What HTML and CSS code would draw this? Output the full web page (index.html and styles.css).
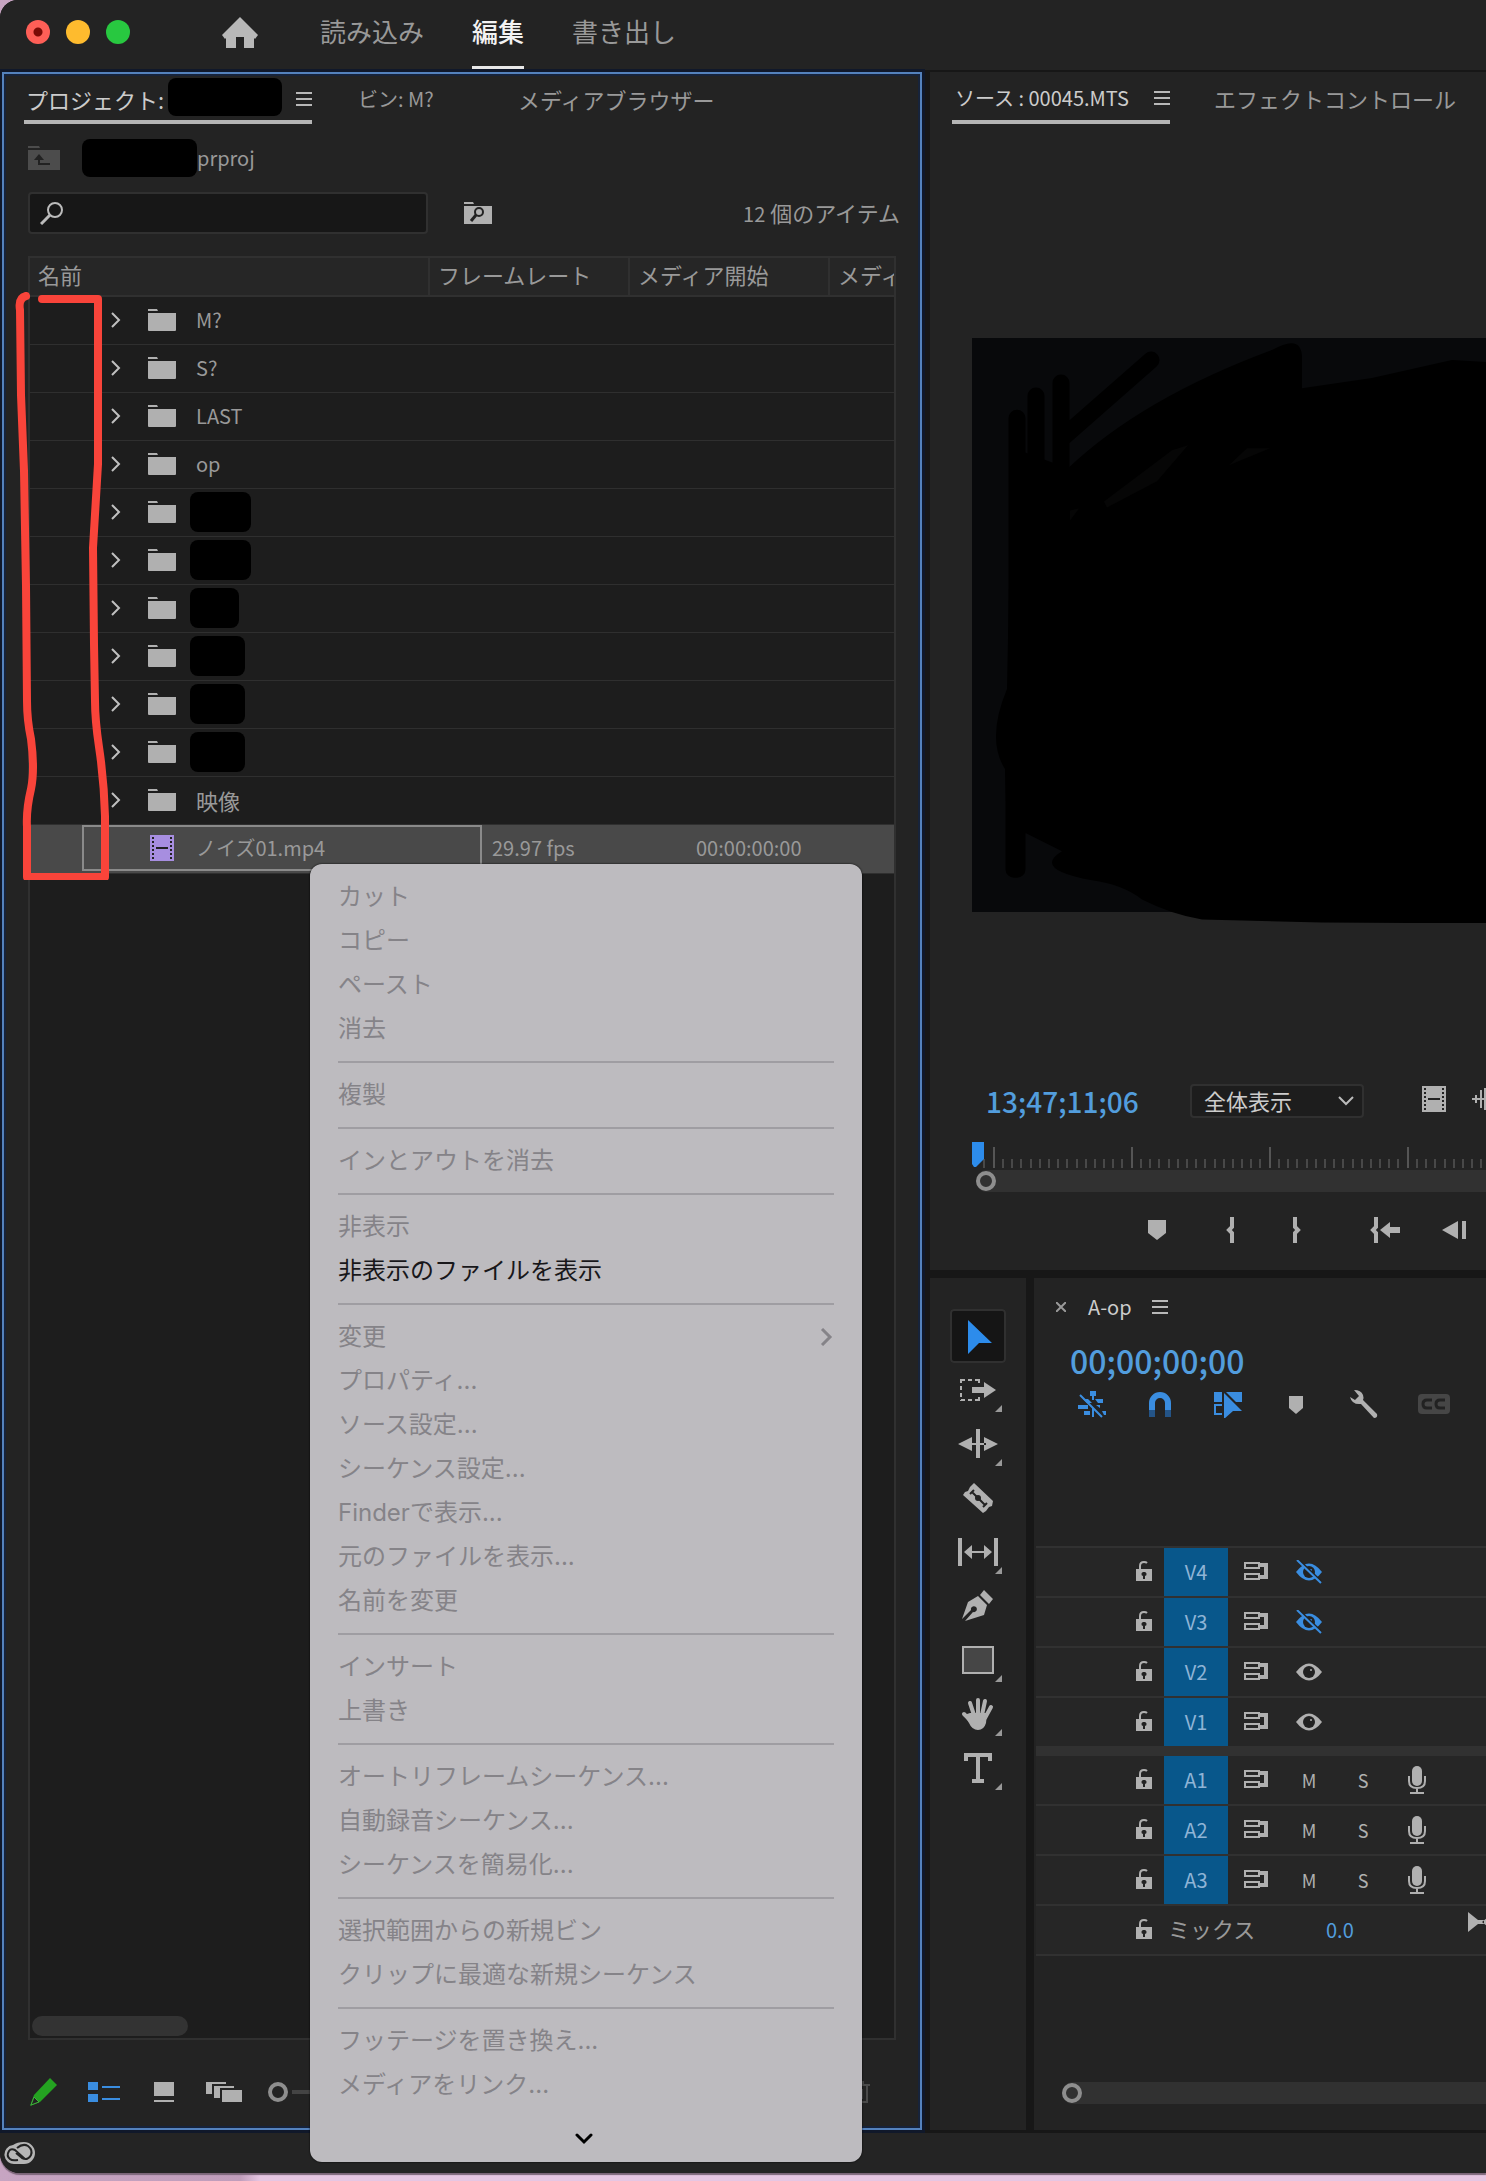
FILE: index.html
```html
<!DOCTYPE html>
<html lang="ja">
<head>
    <meta charset="UTF-8">
    <meta name="viewport" content="width=device-width, initial-scale=1.0">
    <title>編集</title>
    <link rel="stylesheet" href="styles.css">
</head>
<body>
    <!-- Shared icons -->
    <svg class="sprite" aria-hidden="true">
        <symbol id="i-menu" viewBox="0 0 16 14"><path d="M0 1h16M0 7h16M0 13h16" stroke="currentColor" stroke-width="2"/></symbol>
        <symbol id="i-folder" viewBox="0 0 28 22"><path d="M0 0h9l1 2H0zM0 4h28v17a1 1 0 0 1-1 1H1a1 1 0 0 1-1-1z" fill="currentColor"/></symbol>
        <symbol id="i-chevron" viewBox="0 0 10 16"><path d="M1 1l7 7-7 7" fill="none" stroke="currentColor" stroke-width="2"/></symbol>
        <symbol id="i-film" viewBox="0 0 24 26">
            <path d="M0 0h24v26H0z" fill="currentColor"/>
            <path d="M3 2v24M21 2v24" stroke="#222" stroke-width="2" stroke-dasharray="2 2"/>
            <path d="M6 13h12" stroke="#222" stroke-width="2"/>
        </symbol>
        <symbol id="i-marker" viewBox="0 0 18 20"><path d="M0 0h18v13l-9 7-9-7z" fill="currentColor"/></symbol>
        <symbol id="i-lock" viewBox="0 0 16 20">
            <path d="M4 9V5q0-4 4-4 2 0 3 1" fill="none" stroke="currentColor" stroke-width="2"/>
            <path d="M0 8h16v12H0z" fill="currentColor"/>
            <path d="M8 11a2 2 0 0 1 1 4v3H7v-3a2 2 0 0 1 1-4z" fill="#222"/>
        </symbol>
        <symbol id="i-sync" viewBox="0 0 24 18">
            <path d="M1 1h14v5H1zM1 12h14v5H1z" fill="none" stroke="currentColor" stroke-width="2"/>
            <path d="M16 1h8v16h-8v-4h4V5h-4z" fill="currentColor"/>
        </symbol>
        <symbol id="i-eye" viewBox="0 0 26 24">
            <path d="M0 12q13-17 26 0-13 17-26 0z" fill="currentColor"/>
            <circle cx="13" cy="12" r="6" fill="#222"/><circle cx="15" cy="10" r="1" fill="currentColor"/>
        </symbol>
        <symbol id="i-eye-off" viewBox="0 0 26 24">
            <path d="M0 12q13-17 26 0-13 17-26 0z" fill="currentColor"/>
            <circle cx="13" cy="12" r="6" fill="#222"/><circle cx="15" cy="10" r="1" fill="currentColor"/>
            <path d="M3 0l24 23" stroke="#222" stroke-width="2"/>
            <path d="M1 0l24 23" stroke="currentColor" stroke-width="2"/>
        </symbol>
        <symbol id="i-mic" viewBox="0 0 18 28">
            <rect x="4" width="10" height="20" rx="5" fill="currentColor"/>
            <path d="M1 10v5q0 7 8 7t8-7v-5M9 22v5M2 27h14" fill="none" stroke="currentColor" stroke-width="2"/>
        </symbol>
    </svg>

    <div class="app">
        <header class="top-bar">
            <div class="lights">
                <span class="light light-close"></span>
                <span class="light light-min"></span>
                <span class="light light-max"></span>
            </div>
            <button class="home" aria-label="ホーム">
                <svg width="36" height="32" viewBox="0 0 36 32"><path d="M18 0L0 18l3 4 1-1v10h10V20h8v11h10V21l1 1 3-4z" fill="#b8b8b8"/></svg>
            </button>
            <nav class="modes">
                <a href="#">読み込み</a>
                <a href="#" class="active">編集</a>
                <a href="#">書き出し</a>
            </nav>
        </header>

        <main class="workspace">
            <section class="project">
                <div class="tabs">
                    <button class="tab tab-project active">プロジェクト: <span class="redacted"></span><svg class="menu-icon"><use href="#i-menu"/></svg></button>
                    <button class="tab tab-bin">ビン: M?</button>
                    <button class="tab">メディアブラウザー</button>
                </div>

                <div class="path">
                    <svg width="32" height="24" viewBox="0 0 32 24"><path d="M0 0h11l1 2H0zM0 4h32v20H0z" fill="#4c4c4c"/><path d="M11 10v8h11" fill="none" stroke="#222" stroke-width="2"/><path d="M6 14l5-6 5 6z" fill="#222"/></svg>
                    <span class="redacted"></span>
                    <span class="latin">prproj</span>
                </div>

                <div class="search-row">
                    <label class="search">
                        <svg width="24" height="24" viewBox="0 0 24 24"><circle cx="15" cy="9" r="7" fill="none" stroke="#bbb" stroke-width="2"/><path d="M10 14l-9 9" stroke="#bbb" stroke-width="3"/></svg>
                        <input type="text" aria-label="検索">
                    </label>
                    <button class="search-bin" aria-label="検索ビン">
                        <svg width="28" height="22" viewBox="0 0 28 22"><path d="M0 0h9l1 2H0zM0 4h28v18H0z" fill="#b0b0b0"/><circle cx="15" cy="10" r="4" fill="none" stroke="#222" stroke-width="2"/><path d="M12 13l-5 6" stroke="#222" stroke-width="3"/></svg>
                    </button>
                    <span class="count"><span class="latin">12</span> 個のアイテム</span>
                </div>

                <div class="list">
                    <table class="items">
                        <colgroup>
                            <col class="c-label"><col class="c-name"><col class="c-label"><col class="c-rate">
                            <col class="c-label"><col class="c-rate"><col>
                        </colgroup>
                        <thead>
                            <tr><th colspan="2">名前</th><th colspan="2">フレームレート</th><th colspan="2">メディア開始</th><th>メディア</th></tr>
                        </thead>
                        <tbody>
                            <tr><td></td><td colspan="2"><div class="name"><svg class="chevron"><use href="#i-chevron"/></svg><svg class="folder"><use href="#i-folder"/></svg><span class="latin">M?</span></div></td><td colspan="2"></td><td colspan="2"></td></tr>
                            <tr><td></td><td colspan="2"><div class="name"><svg class="chevron"><use href="#i-chevron"/></svg><svg class="folder"><use href="#i-folder"/></svg><span class="latin">S?</span></div></td><td colspan="2"></td><td colspan="2"></td></tr>
                            <tr><td></td><td colspan="2"><div class="name"><svg class="chevron"><use href="#i-chevron"/></svg><svg class="folder"><use href="#i-folder"/></svg><span class="latin">LAST</span></div></td><td colspan="2"></td><td colspan="2"></td></tr>
                            <tr><td></td><td colspan="2"><div class="name"><svg class="chevron"><use href="#i-chevron"/></svg><svg class="folder"><use href="#i-folder"/></svg><span class="latin">op</span></div></td><td colspan="2"></td><td colspan="2"></td></tr>
                            <tr><td></td><td colspan="2"><div class="name"><svg class="chevron"><use href="#i-chevron"/></svg><svg class="folder"><use href="#i-folder"/></svg><span class="redacted wide"></span></div></td><td colspan="2"></td><td colspan="2"></td></tr>
                            <tr><td></td><td colspan="2"><div class="name"><svg class="chevron"><use href="#i-chevron"/></svg><svg class="folder"><use href="#i-folder"/></svg><span class="redacted wide"></span></div></td><td colspan="2"></td><td colspan="2"></td></tr>
                            <tr><td></td><td colspan="2"><div class="name"><svg class="chevron"><use href="#i-chevron"/></svg><svg class="folder"><use href="#i-folder"/></svg><span class="redacted narrow"></span></div></td><td colspan="2"></td><td colspan="2"></td></tr>
                            <tr><td></td><td colspan="2"><div class="name"><svg class="chevron"><use href="#i-chevron"/></svg><svg class="folder"><use href="#i-folder"/></svg><span class="redacted"></span></div></td><td colspan="2"></td><td colspan="2"></td></tr>
                            <tr><td></td><td colspan="2"><div class="name"><svg class="chevron"><use href="#i-chevron"/></svg><svg class="folder"><use href="#i-folder"/></svg><span class="redacted"></span></div></td><td colspan="2"></td><td colspan="2"></td></tr>
                            <tr><td></td><td colspan="2"><div class="name"><svg class="chevron"><use href="#i-chevron"/></svg><svg class="folder"><use href="#i-folder"/></svg><span class="redacted"></span></div></td><td colspan="2"></td><td colspan="2"></td></tr>
                            <tr><td></td><td colspan="2"><div class="name"><svg class="chevron"><use href="#i-chevron"/></svg><svg class="folder"><use href="#i-folder"/></svg><span>映像</span></div></td><td colspan="2"></td><td colspan="2"></td></tr>
                            <tr class="selected"><td></td><td colspan="2"><div class="name"><span class="chevron"></span><svg class="clip"><use href="#i-film"/></svg><span class="latin">ノイズ01.mp4</span></div></td><td colspan="2" class="rate">29.97 fps</td><td colspan="2" class="start">00:00:00:00</td></tr>
                        </tbody>
                    </table>
                    <div class="list-scroll"></div>
                </div>

                <footer class="project-tools">
                    <svg width="28" height="28" viewBox="0 0 28 28"><path d="M20 0l7 7L10 24 0 28l4-11z" fill="#24a321"/><path d="M4 19l5 5-8 3z" fill="#222" stroke="#3fb03c"/></svg>
                    <svg class="blue" width="32" height="20" viewBox="0 0 32 20"><path d="M0 0h10v8H0zM0 12h10v8H0zM14 4h18v2H14zM14 16h18v2H14z" fill="currentColor"/></svg>
                    <svg width="20" height="20" viewBox="0 0 20 20"><path d="M0 0h20v14H0zM0 18h20v2H0z" fill="currentColor"/></svg>
                    <svg width="36" height="20" viewBox="0 0 36 20"><path d="M0 0h20v2H6v10H0zM8 4h20v2H14v10H8zM16 8h20v12H16z" fill="currentColor"/></svg>
                    <div class="zoom-slider"><span class="knob"></span><span class="line"></span></div>
                    <svg class="trash" width="20" height="22" viewBox="0 0 20 22"><path d="M0 4h20M3 4v17h14V4M7 4V1h6v3M8 8v10M12 8v10" fill="none" stroke="#4a4a4a" stroke-width="2"/></svg>
                </footer>

                <!-- Hand drawn mark over the label column -->
                <svg class="mark" width="110" height="600" viewBox="0 0 110 600">
                    <path d="M26 16Q18 18 20 30L21 115 24 191 26 306 27 421Q27 440 31 459 35 490 31 509 26 530 27 547L27 597H105L105 536Q104 500 99 467 95 440 95 421L94 364 93 268 98 184V19L42 19" fill="none" stroke="#f9443a" stroke-width="8" stroke-linecap="round" stroke-linejoin="round"/>
                </svg>

                <div class="context-menu">
                    <button disabled>カット</button>
                    <button disabled>コピー</button>
                    <button disabled>ペースト</button>
                    <button disabled>消去</button>
                    <hr>
                    <button disabled>複製</button>
                    <hr>
                    <button disabled>インとアウトを消去</button>
                    <hr>
                    <button disabled>非表示</button>
                    <button>非表示のファイルを表示</button>
                    <hr>
                    <button disabled>変更<svg width="14" height="18" viewBox="0 0 14 18"><path d="M2 1l8 8-8 8" fill="none" stroke="currentColor" stroke-width="3"/></svg></button>
                    <button disabled>プロパティ...</button>
                    <button disabled>ソース設定...</button>
                    <button disabled>シーケンス設定...</button>
                    <button disabled>Finderで表示...</button>
                    <button disabled>元のファイルを表示...</button>
                    <button disabled>名前を変更</button>
                    <hr>
                    <button disabled>インサート</button>
                    <button disabled>上書き</button>
                    <hr>
                    <button disabled>オートリフレームシーケンス...</button>
                    <button disabled>自動録音シーケンス...</button>
                    <button disabled>シーケンスを簡易化...</button>
                    <hr>
                    <button disabled>選択範囲からの新規ビン</button>
                    <button disabled>クリップに最適な新規シーケンス</button>
                    <hr>
                    <button disabled>フッテージを置き換え...</button>
                    <button disabled>メディアをリンク...</button>
                    <div class="more"><svg width="18" height="12" viewBox="0 0 18 12"><path d="M2 2l7 7 7-7" fill="none" stroke="#000" stroke-width="3" stroke-linecap="round"/></svg></div>
                </div>
            </section>

            <div class="right">
                <section class="source">
                    <div class="tabs">
                        <button class="tab tab-source active"><span class="latin">ソース : 00045.MTS</span><svg class="menu-icon"><use href="#i-menu"/></svg></button>
                        <button class="tab">エフェクトコントロール</button>
                    </div>
                    <div class="monitor">
                        <svg viewBox="0 0 514 584" preserveAspectRatio="none">
                            <path d="M45 80V530M64 58V300M89 45V300M179 22L90 100M42 400V530" stroke="#000" stroke-width="17" stroke-linecap="round"/>
                            <path d="M96 130Q170 60 300 12 330-5 330 20V50L400 40 480 22 514 24V584L350 583 230 580Q200 575 170 560 150 545 120 541 60 530 90 512L54 494H35L33 430Q14 400 35 350L38 200 41 110 96 130z"/>
                            <path d="M132 163l68-51 16-5-31 36-50 26zM257 127l18-17h23zM98 172l9-2-9 12z" fill="#060606"/>
                        </svg>
                    </div>
                    <div class="source-bar">
                        <span class="timecode">13;47;11;06</span>
                        <select class="fit" aria-label="表示倍率"><option>全体表示</option></select>
                        <svg class="film"><use href="#i-film"/></svg>
                        <svg class="wave" width="24" height="22" viewBox="0 0 24 22"><path d="M0 11h24M4 7v8M9 2v18M13 0v22M17 5v12M21 8v6" stroke="currentColor" stroke-width="2"/></svg>
                    </div>
                    <div class="ruler">
                        <svg width="100%" height="26">
                            <defs>
                                <pattern id="ticks" x="21" width="138" height="26" patternUnits="userSpaceOnUse">
                                    <path d="M1 5v21" stroke="#555" stroke-width="2"/>
                                    <path d="M10 17v9M19 17v9M28 17v9M38 17v9M47 17v9M56 17v9M65 17v9M74 17v9M84 17v9M93 17v9M102 17v9M111 17v9M120 17v9M129 17v9" stroke="#484848" stroke-width="2"/>
                                </pattern>
                            </defs>
                            <rect x="4" width="100%" height="26" fill="url(#ticks)"/>
                            <path d="M0 0h12v17l-8 8H2L0 22z" fill="#2d8ceb"/>
                        </svg>
                        <div class="scroller"><span class="knob"></span></div>
                    </div>
                    <div class="transport">
                        <button class="add-marker" aria-label="マーカーを追加"><svg width="18" height="20"><use href="#i-marker"/></svg></button>
                        <button aria-label="インをマーク"><svg width="10" height="26" viewBox="0 0 10 26"><path d="M6 0v10l-3 3 3 3v10" fill="none" stroke="currentColor" stroke-width="4"/></svg></button>
                        <button aria-label="アウトをマーク"><svg width="10" height="26" viewBox="0 0 10 26"><path d="M4 0v10l3 3-3 3v10" fill="none" stroke="currentColor" stroke-width="4"/></svg></button>
                        <button class="go-in" aria-label="インへ移動"><svg width="30" height="26" viewBox="0 0 30 26"><path d="M6 0v10l-3 3 3 3v10" fill="none" stroke="currentColor" stroke-width="4"/><path d="M10 13l10-8v5h10v6H20v5z" fill="currentColor"/></svg></button>
                        <button aria-label="1フレーム戻る"><svg width="24" height="18" viewBox="0 0 24 18"><path d="M0 9L16 0v18zM20 0h4v18h-4z" fill="currentColor"/></svg></button>
                    </div>
                </section>

                <div class="lower">
                    <section class="tools">
                        <button class="tool active" aria-label="選択"><svg viewBox="0 0 56 54"><path d="M18 11l24 23H29l-11 11z" fill="#2d8ceb"/></svg></button>
                        <button class="tool" aria-label="トラックの選択"><svg viewBox="0 0 56 54"><path d="M11 17h18M11 37h18M11 16v22M29 16v4M29 34v4" fill="none" stroke="currentColor" stroke-width="2" stroke-dasharray="4 3"/><path d="M22 24h12v-5l12 8-12 8v-5H22z" fill="currentColor"/><path d="M52 42v7h-7z" fill="#999"/></svg></button>
                        <button class="tool" aria-label="リップル"><svg viewBox="0 0 56 54"><path d="M8 27l14-7v14zM48 27l-14-7v14zM26 12h4v29h-4zM20 26h16v2H20z" fill="currentColor"/><path d="M52 42v7h-7z" fill="#999"/></svg></button>
                        <button class="tool" aria-label="レーザー"><svg viewBox="0 0 56 54"><path d="M24 12l19 18-1 5-3 1-3 4-3 2-20-18 2-3 3-1 2-4z" fill="currentColor"/><path d="M22 21l13 13M20 23l4-4M33 36l4-4" stroke="#222" stroke-width="2"/><circle cx="28" cy="27" r="3" fill="#222"/></svg></button>
                        <button class="tool" aria-label="スリップ"><svg viewBox="0 0 56 54"><path d="M8 13h4v28H8zM44 13h4v28h-4zM14 27l8-7v6h12v-6l8 7-8 7v-6H22v6z" fill="currentColor"/><path d="M52 42v7h-7z" fill="#999"/></svg></button>
                        <button class="tool" aria-label="ペン"><svg viewBox="0 0 56 54"><path d="M34 11l9 9-4 5-9-9zM28 17l9 9-3 10-19 6 8-9a3 3 0 1 0-2-2l-9 9 6-17z" fill="currentColor"/></svg></button>
                        <button class="tool" aria-label="長方形"><svg viewBox="0 0 56 54"><path d="M13 14h30v26H13z" fill="#464646" stroke="currentColor" stroke-width="2"/><path d="M52 42v7h-7z" fill="#999"/></svg></button>
                        <button class="tool" aria-label="手のひら"><svg viewBox="0 0 56 54"><path d="M21 34L14 27M24 28L20 16M28 26V13M32 28l3-14M35 31l6-11" stroke="currentColor" stroke-width="4" stroke-linecap="round"/><path d="M20 26h17l-1 10q-2 7-8 7t-9-7l-5-8z" fill="currentColor"/><path d="M52 42v7h-7z" fill="#999"/></svg></button>
                        <button class="tool" aria-label="横書き文字"><svg viewBox="0 0 56 54"><path d="M16 20v-6h24v6M28 14v26M22 40h12" fill="none" stroke="currentColor" stroke-width="4"/><path d="M52 42v7h-7z" fill="#999"/></svg></button>
                    </section>

                    <section class="timeline">
                        <div class="sequence-tab">
                            <button aria-label="閉じる"><svg width="10" height="10" viewBox="0 0 10 10"><path d="M0 0l10 10M10 0L0 10" stroke="#999" stroke-width="2"/></svg></button>
                            <span class="sequence-name">A-op</span>
                            <svg class="menu-icon"><use href="#i-menu"/></svg>
                        </div>
                        <div class="timecode timecode-large">00;00;00;00</div>
                        <div class="sequence-tools">
                            <svg class="blue" viewBox="0 0 28 28"><path d="M12 1h6v5h-2v4h-2V6h-2zM17 9h8v4h-5zM5 9h5l4 4H9zM0 15h10v4H0zM18 15h4v3zM6 21h6v4H6zM14 18v10M24 21h4v4h-2z" fill="currentColor"/><path d="M2 5l22 22M15 18v9" stroke="currentColor" stroke-width="2"/></svg>
                            <svg class="blue" viewBox="0 0 28 28"><path d="M6 20v-7a8 8 0 0 1 16 0v7" fill="none" stroke="currentColor" stroke-width="6"/><path d="M3 20h6v7H3zM19 20h6v7h-6z" fill="#245487"/></svg>
                            <svg class="blue" viewBox="0 0 28 28"><path d="M0 2h8v10H0zM12 2h16v10h-6zM10 3l18 18h-9l-9 8z" fill="currentColor"/><path d="M8 15H1v9h7" fill="none" stroke="currentColor" stroke-width="2"/></svg>
                            <svg viewBox="0 0 28 28"><path d="M7 6h14v12l-7 6-7-6z" fill="currentColor"/></svg>
                            <svg viewBox="0 0 28 28"><path d="M4 0q7 0 9 5 1 3 0 5l14 14q1 4-3 4L11 14q-9 1-11-7l5 3 4-4z" fill="currentColor"/></svg>
                            <svg class="cc" viewBox="0 0 32 28"><rect y="4" width="32" height="20" rx="4" fill="#464646"/><path d="M14 10H9q-4 0-4 4t4 4h5M27 10h-5q-4 0-4 4t4 4h5" fill="none" stroke="#222" stroke-width="3"/></svg>
                        </div>

                        <div class="tracks">
                            <div class="track"><svg class="lock"><use href="#i-lock"/></svg><button class="target">V4</button><svg class="sync"><use href="#i-sync"/></svg><svg class="eye blue"><use href="#i-eye-off"/></svg></div>
                            <div class="track"><svg class="lock"><use href="#i-lock"/></svg><button class="target">V3</button><svg class="sync"><use href="#i-sync"/></svg><svg class="eye blue"><use href="#i-eye-off"/></svg></div>
                            <div class="track"><svg class="lock"><use href="#i-lock"/></svg><button class="target">V2</button><svg class="sync"><use href="#i-sync"/></svg><svg class="eye"><use href="#i-eye"/></svg></div>
                            <div class="track"><svg class="lock"><use href="#i-lock"/></svg><button class="target">V1</button><svg class="sync"><use href="#i-sync"/></svg><svg class="eye"><use href="#i-eye"/></svg></div>
                            <div class="track-split"></div>
                            <div class="track"><svg class="lock"><use href="#i-lock"/></svg><button class="target">A1</button><svg class="sync"><use href="#i-sync"/></svg><button class="toggle">M</button><button class="toggle">S</button><svg class="mic"><use href="#i-mic"/></svg></div>
                            <div class="track"><svg class="lock"><use href="#i-lock"/></svg><button class="target">A2</button><svg class="sync"><use href="#i-sync"/></svg><button class="toggle">M</button><button class="toggle">S</button><svg class="mic"><use href="#i-mic"/></svg></div>
                            <div class="track"><svg class="lock"><use href="#i-lock"/></svg><button class="target">A3</button><svg class="sync"><use href="#i-sync"/></svg><button class="toggle">M</button><button class="toggle">S</button><svg class="mic"><use href="#i-mic"/></svg></div>
                            <div class="track"><svg class="lock"><use href="#i-lock"/></svg><span class="mix">ミックス</span><span class="level">0.0</span><svg class="skip" width="32" height="20" viewBox="0 0 32 20"><path d="M0 0l10 8h6v4h-6L0 20zM26 0L14 10l12 10z" fill="currentColor"/></svg></div>
                        </div>

                        <div class="scroller"><span class="knob"></span></div>
                    </section>
                </div>
            </div>
        </main>

        <footer class="status-bar">
            <svg width="32" height="24" viewBox="0 0 32 24"><path d="M20 1a11 11 0 0 1 0 22H11A9 9 0 0 1 9 4q4-3 11-3z" fill="#b5b5b5"/><path d="M21 18l-10-9q-4-2-6 1-3 5 1 8 2 2 8 1M13 7q6-5 11-2 5 4 3 9-3 6-9 3l-6-5" fill="none" stroke="#222" stroke-width="2"/></svg>
        </footer>
    </div>
</body>
</html>
```
FILE: styles.css
```css
* {
    box-sizing: border-box;
}

body {
    display: flex;
    flex-direction: column;
    min-height: 100vh;
    margin: 0;
    padding-bottom: 8px;
    background: linear-gradient(to right, #c7a5c2, #c09dbb 240px, #e6c6e2 260px);
    color: #999;
    font-family: "Noto Sans CJK JP", sans-serif;
    font-size: 22px;
    line-height: 32px;
    overflow-x: hidden;
}

button {
    margin: 0;
    padding: 0;
    border: none;
    background: none;
    color: inherit;
    font: inherit;
    white-space: nowrap;
}

svg {
    display: block;
    flex: none;
}

.sprite {
    position: absolute;
    width: 0;
    height: 0;
}

.latin {
    font-size: 20px;
}

.blue {
    color: #3a8de0;
}

.app {
    display: flex;
    flex: 1;
    flex-direction: column;
    border-radius: 18px 0 0 20px;
    background-color: #171717;
    overflow: hidden;
    box-shadow: 0 2px 1px #7b6578;
}

/* Top bar */
.top-bar {
    display: flex;
    height: 70px;
    margin-bottom: 2px;
    padding-left: 26px;
    background-color: #232323;
}

.lights {
    display: flex;
    gap: 16px;
    padding-top: 20px;
}

.light {
    width: 24px;
    height: 24px;
    border-radius: 50%;
}

.light-close {
    background: radial-gradient(circle, #7a0b06 4px, #fe5f57 5px);
}

.light-min {
    background-color: #febb2e;
}

.light-max {
    background-color: #28c840;
}

.home {
    width: 36px;
    margin-left: 92px;
    padding-bottom: 4px;
}

.modes {
    display: flex;
    gap: 48px;
    margin-left: 62px;
    font-size: 26px;
}

.modes a {
    height: 69px;
    padding-top: 15px;
    border-bottom: 3px solid transparent;
    color: #999;
    text-decoration: none;
}

.modes .active {
    border-color: #e8e8e8;
    color: #f2f2f2;
    font-weight: 500;
}

/* Panels */
.workspace {
    display: grid;
    flex: 1;
    grid-template-columns: minmax(0, 920fr) minmax(0, 556fr);
    gap: 8px;
    padding-left: 2px;
}

.project,
.source,
.tools,
.timeline {
    background-color: #232323;
}

.tabs {
    display: flex;
    height: 50px;
}

.tab {
    display: flex;
    align-items: center;
    padding-top: 4px;
    border-bottom: 4px solid transparent;
}

.tab.active {
    border-color: #b5b5b5;
    color: #ccc;
}

.menu-icon {
    width: 16px;
    height: 14px;
    margin-left: auto;
    color: #b8b8b8;
}

.redacted {
    flex: none;
    background-color: #000;
    border-radius: 8px;
}

/* Project panel */
.project {
    position: relative;
    display: flex;
    flex-direction: column;
    border: 2px solid #5482bd;
    box-shadow: 0 0 0 3px #10182a, inset 0 0 0 2px #17233a;
}

.project .tabs {
    padding-left: 20px;
}

.tab-project {
    width: 288px;
    padding-left: 2px;
}

.tab-project .redacted {
    width: 114px;
    height: 38px;
    margin: 0 0 4px 4px;
}

.tab-bin {
    width: 160px;
    margin-left: 46px;
    font-size: 20px;
}

.path {
    display: flex;
    align-items: center;
    height: 68px;
    padding-left: 24px;
}

.path .redacted {
    width: 115px;
    height: 38px;
    margin-left: 22px;
}

.search-row {
    display: flex;
    align-items: center;
    padding: 0 20px 0 24px;
}

.search {
    display: flex;
    align-items: center;
    width: 400px;
    height: 42px;
    padding-left: 10px;
    border: 2px solid #303030;
    border-radius: 4px;
    background-color: #171717;
}

.search input {
    flex: 1;
    min-width: 0;
    border: none;
    outline: none;
    background: none;
    color: #ccc;
    font: inherit;
}

.search-bin {
    margin-left: 36px;
}

.count {
    margin-left: auto;
    white-space: nowrap;
}

.list {
    display: flex;
    flex: 1;
    flex-direction: column;
    justify-content: space-between;
    margin: 22px 24px 0;
    border: 2px solid #303030;
    background-color: #1d1d1d;
}

.items {
    width: 100%;
    border-spacing: 0;
    table-layout: fixed;
}

.c-label {
    width: 52px;
}

.c-name {
    width: 348px;
}

.c-rate {
    width: 148px;
}

.items th {
    height: 39px;
    padding: 0 0 5px 8px;
    border-right: 2px solid #303030;
    border-bottom: 2px solid #303030;
    background-color: #262626;
    font-weight: 400;
    text-align: left;
    white-space: nowrap;
    overflow: hidden;
}

.items th:last-child {
    border-right: none;
}

.items td {
    height: 48px;
    padding: 0 0 2px;
    border-bottom: 1px solid #2f2f2f;
    font-size: 20px;
}

.name {
    display: flex;
    align-items: center;
    height: 45px;
    padding-left: 29px;
    font-size: 22px;
}

.chevron {
    width: 10px;
    height: 16px;
    color: #c0c0c0;
}

.folder {
    width: 28px;
    height: 22px;
    margin: 0 20px 0 27px;
    color: #b0b0b0;
}

.name .redacted {
    width: 55px;
    height: 40px;
    margin-left: -6px;
}

.name .wide {
    width: 61px;
}

.name .narrow {
    width: 49px;
}

.selected td {
    background-color: #494949;
}

.selected .name {
    height: 46px;
    border: 2px solid #8a8a8a;
    padding-left: 27px;
}

.clip {
    width: 24px;
    height: 26px;
    margin: 0 22px 0 29px;
    color: #a78ee0;
}

.items .rate {
    padding-left: 10px;
}

.items .start {
    padding-left: 14px;
}

.list-scroll {
    width: 156px;
    height: 20px;
    margin: 2px;
    border-radius: 10px;
    background-color: #333;
}

.project-tools {
    display: flex;
    align-items: center;
    height: 88px;
    padding: 16px 50px 0 26px;
    color: #b0b0b0;
}

.project-tools .blue {
    margin: 0 34px 0 30px;
}

.project-tools svg + svg + svg + svg {
    margin-left: 32px;
}

.zoom-slider {
    display: flex;
    flex: 1;
    align-items: center;
    gap: 4px;
    margin-left: 26px;
}

.knob {
    width: 20px;
    height: 20px;
    border: 4px solid #8e8e8e;
    border-radius: 50%;
}

.line {
    width: 160px;
    height: 4px;
    background-color: #444;
}

.mark {
    position: absolute;
    top: 206px;
    left: -4px;
}

/* Context menu */
.context-menu {
    position: absolute;
    top: 790px;
    left: 306px;
    z-index: 2;
    width: 552px;
    padding: 11px 28px 0;
    border-radius: 12px;
    background-color: #bdbbbf;
    box-shadow: 0 0 2px #000;
    font-family: Inter, "Noto Sans CJK JP", sans-serif;
    font-size: 24px;
}

.context-menu button {
    display: flex;
    align-items: center;
    justify-content: space-between;
    width: 100%;
    height: 44px;
    color: #18171a;
}

.context-menu button:disabled {
    color: #858388;
}

.context-menu hr {
    height: 2px;
    margin: 10px 0;
    border: none;
    background-color: #9f9da2;
}

.more {
    display: flex;
    justify-content: center;
    padding: 26px 4px 17px 0;
}

/* Source monitor */
.right {
    display: flex;
    flex-direction: column;
    gap: 8px;
}

.source {
    overflow: hidden;
}

.source .tabs {
    height: 52px;
    padding-left: 22px;
}

.tab-source {
    width: 218px;
    margin-right: 44px;
    padding-left: 3px;
}

.monitor {
    position: relative;
    margin: 214px 0 0 42px;
    aspect-ratio: 514 / 574;
    background-color: #08090b;
}

.monitor svg {
    position: absolute;
    width: 100%;
    height: 102%;
}

.source-bar {
    display: flex;
    align-items: center;
    height: 34px;
    margin-top: 172px;
    padding-left: 56px;
    color: #b0b0b0;
}

.timecode {
    color: #529ddd;
    font-size: 28px;
    font-weight: 500;
}

.source-bar .timecode {
    flex: none;
    width: 204px;
}

.fit {
    flex: none;
    width: 174px;
    height: 34px;
    padding: 0 12px 2px;
    border: 2px solid #303030;
    border-radius: 4px;
    appearance: none;
    background: #1d1d1d url("data:image/svg+xml,%3Csvg xmlns='http://www.w3.org/2000/svg' width='16' height='10'%3E%3Cpath d='M1 1l7 7 7-7' fill='none' stroke='%23bbb' stroke-width='2'/%3E%3C/svg%3E") no-repeat right 8px center;
    color: #ccc;
    font: inherit;
    line-height: 28px;
}

.film {
    width: 24px;
    height: 26px;
    margin: 0 26px 4px 58px;
}

.wave {
    margin-bottom: 4px;
}

.ruler {
    margin: 24px 0 0 42px;
}

.scroller {
    height: 22px;
    padding: 1px 0;
    border-radius: 11px 0 0 11px;
    background-color: #313131;
}

.scroller .knob {
    display: block;
}

.ruler .scroller {
    margin: 2px 0 0 4px;
}

.transport {
    display: flex;
    align-items: center;
    gap: 35px;
    height: 78px;
    padding: 0 0 3px 212px;
    color: #b0b0b0;
}

.transport button {
    display: flex;
    flex: none;
    justify-content: center;
    width: 30px;
}

.transport .add-marker {
    margin-right: 9px;
}

.transport .go-in {
    margin: 0 4px 0 24px;
}

/* Tools and timeline */
.lower {
    display: flex;
    flex: 1;
    gap: 8px;
}

.tools {
    display: flex;
    flex: none;
    flex-direction: column;
    align-items: center;
    width: 96px;
    padding-top: 31px;
    color: #b0b0b0;
}

.tool {
    width: 56px;
    height: 54px;
}

.tool.active {
    border-radius: 4px;
    background-color: #151515;
    box-shadow: inset 0 0 0 2px #303030;
}

.timeline {
    display: flex;
    flex: 1;
    flex-direction: column;
    min-width: 0;
    padding-bottom: 26px;
    overflow: hidden;
}

.sequence-tab {
    display: flex;
    align-items: center;
    height: 58px;
    padding-left: 22px;
}

.sequence-name {
    width: 64px;
    margin-left: 22px;
    color: #ccc;
    font-size: 20px;
}

.sequence-tab .menu-icon {
    margin-left: 0;
}

.timecode-large {
    padding: 8px 0 12px 36px;
    font-size: 32px;
}

.sequence-tools {
    display: flex;
    gap: 40px;
    height: 36px;
    padding: 2px 0 0 44px;
    color: #b0b0b0;
}

.sequence-tools svg {
    width: 28px;
    height: 28px;
}

.sequence-tools .cc {
    width: 32px;
}

.tracks {
    margin: 122px 0 0 2px;
    border-top: 2px solid #313131;
    color: #b0b0b0;
}

.track {
    display: flex;
    align-items: center;
    height: 50px;
    padding-left: 100px;
    border-bottom: 2px solid #313131;
    background-color: #262626;
}

.lock {
    width: 16px;
    height: 20px;
    margin-bottom: 2px;
}

.target {
    flex: none;
    width: 64px;
    height: 48px;
    margin: 0 16px 0 12px;
    background-color: #08578b;
    color: #8fb4d6;
    font-size: 20px;
}

.sync {
    width: 24px;
    height: 18px;
    margin-bottom: 2px;
}

.eye {
    width: 26px;
    height: 24px;
    margin-left: 28px;
}

.toggle {
    flex: none;
    width: 54px;
    font-size: 18px;
}

.sync + .toggle {
    margin-left: 14px;
}

.mic {
    width: 18px;
    height: 28px;
    margin-left: 18px;
}

.track-split {
    height: 8px;
    background-color: #313131;
}

.mix {
    flex: none;
    width: 158px;
    margin-left: 16px;
    padding-bottom: 4px;
    color: #999;
}

.level {
    flex: none;
    width: 142px;
    color: #529ddd;
    font-size: 20px;
}

.skip {
    margin-bottom: 16px;
}

.timeline > .scroller {
    margin: auto 0 0 28px;
}

/* Status bar */
.status-bar {
    display: flex;
    align-items: center;
    height: 40px;
    margin-top: 3px;
    padding-left: 4px;
    background-color: #242424;
}
```
